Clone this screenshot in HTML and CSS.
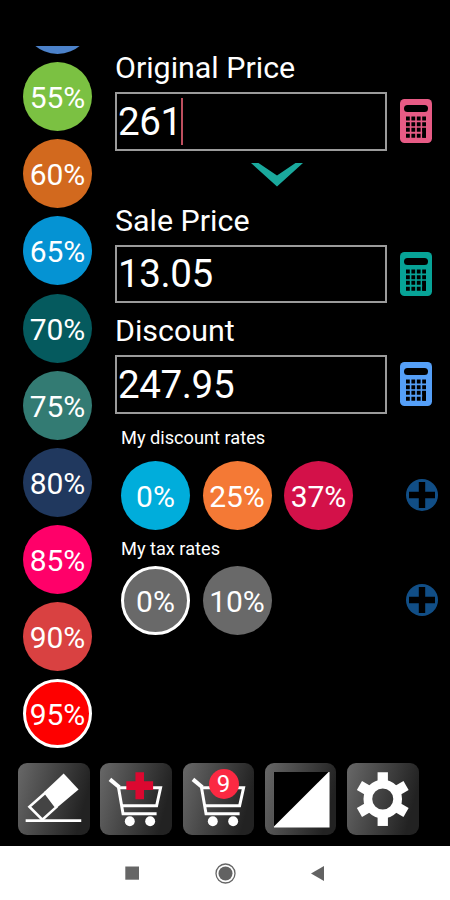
FILE: index.html
```
<!DOCTYPE html>
<html lang="en">
<head>
<meta charset="utf-8">
<title>Discount calculator</title>
<link rel="stylesheet" href="styles.css">
</head>
<body>
<svg class="defs" width="0" height="0">
  <defs>
    <symbol id="calc" viewBox="0 0 32 44">
      <rect width="32" height="44" rx="4.5" fill="currentColor"/>
      <rect x="4" y="6" width="24" height="7" rx="3.5" fill="#000"/>
      <g stroke="#000" stroke-width="4" stroke-dasharray="3.800 1.600">
        <path d="M6 19.500H26.200M6 25.200H26.200M6 30.800H26.200M6 36.700H26.200"/>
      </g>
      <path d="M22.200 29h3.800v9.700h-3.800z" fill="#000"/>
    </symbol>
    <symbol id="plus" viewBox="0 0 32 32">
      <circle cx="16" cy="16" r="16" fill="#114e86"/>
      <path d="M12.800 3h6.400v9.800H29v6.400h-9.800V29h-6.400v-9.800H3v-6.400h9.800z" fill="#000"/>
    </symbol>
    <symbol id="cart" viewBox="0 0 72 72">
      <path d="M18.500 25H61L57 43H22M18.500 24l4.700 27H57" fill="none" stroke="#fff" stroke-width="3"/>
      <path d="M10 16.500l9.500 8" stroke="#fff" stroke-width="4"/>
      <circle cx="30" cy="58.700" r="5" fill="#fff"/>
      <circle cx="50.500" cy="58.700" r="5" fill="#fff"/>
    </symbol>
  </defs>
</svg>
<main class="app">
  <aside class="rates">
    <div class="rate blue"></div>
    <div class="rate green">55%</div>
    <div class="rate orange">60%</div>
    <div class="rate azure">65%</div>
    <div class="rate deep">70%</div>
    <div class="rate sage">75%</div>
    <div class="rate navy">80%</div>
    <div class="rate pink">85%</div>
    <div class="rate coral">90%</div>
    <div class="rate red selected">95%</div>
  </aside>
  <section class="form">
    <label class="title">Original Price</label>
    <div class="row">
      <div class="field"><span>261</span><i class="caret"></i></div>
      <svg class="calc rose"><use href="#calc"/></svg>
    </div>
    <div class="arrow"><svg width="52" height="24" viewBox="0 0 52 24"><path d="M0 0h7.500L26 12.500 44.500 0H52L26 23.500z" fill="#1aa99d"/></svg></div>
    <label class="title">Sale Price</label>
    <div class="row">
      <div class="field"><span>13.05</span></div>
      <svg class="calc teal"><use href="#calc"/></svg>
    </div>
    <label class="title discount">Discount</label>
    <div class="row">
      <div class="field"><span>247.95</span></div>
      <svg class="calc sky"><use href="#calc"/></svg>
    </div>
    <h2 class="small">My discount rates</h2>
    <div class="chips">
      <div class="rate cyan">0%</div>
      <div class="rate amber">25%</div>
      <div class="rate crimson">37%</div>
      <svg class="plus"><use href="#plus"/></svg>
    </div>
    <h2 class="small tax">My tax rates</h2>
    <div class="chips">
      <div class="rate gray selected">0%</div>
      <div class="rate gray">10%</div>
      <svg class="plus"><use href="#plus"/></svg>
    </div>
  </section>
</main>
<nav class="tools">
  <div class="tool"><svg viewBox="0 0 72 72"><path d="M46 10.500L61 26.700 38.500 45.500 26 29.500z" fill="#fff"/><path d="M27.500 30L11.500 44 24.500 57 38.500 44.500z" fill="#444" stroke="#fff" stroke-width="2.600"/><path d="M7.700 58h56" stroke="#fff" stroke-width="2.600"/></svg></div>
  <div class="tool"><svg viewBox="0 0 72 72"><use href="#cart"/><path d="M35.700 9.300h8.600v9h9.200v9h-9.200v9.200h-8.600v-9.200h-9.200v-9h9.200z" fill="#dc0830"/></svg></div>
  <div class="tool"><svg viewBox="0 0 72 72"><use href="#cart"/></svg><span class="badge">9</span></div>
  <div class="tool"><svg viewBox="0 0 72 72"><path d="M9 9h56v56H9z" fill="#fff"/><path d="M9 9h55L9 64z" fill="#000"/></svg></div>
  <div class="tool"><svg viewBox="0 0 72 72">
    <g fill="#fff"><path id="tooth" d="M30.800 9.200h10.400v13h-10.400z"/><use href="#tooth" transform="rotate(60 36 36.300)"/><use href="#tooth" transform="rotate(120 36 36.300)"/><use href="#tooth" transform="rotate(180 36 36.300)"/><use href="#tooth" transform="rotate(240 36 36.300)"/><use href="#tooth" transform="rotate(300 36 36.300)"/></g>
    <circle cx="36" cy="36.300" r="15" fill="none" stroke="#fff" stroke-width="8.800"/></svg></div>
</nav>
<footer class="system">
  <svg viewBox="0 0 450 54"><path d="M125.300 20.500h13.700v13.200h-13.700z" fill="#666"/><circle cx="225.500" cy="27.500" r="9.500" fill="none" stroke="#666" stroke-width="1.300"/><circle cx="225.500" cy="27.500" r="7" fill="#626262"/><path d="M324 20v15l-13-7.500z" fill="#626262"/></svg>
</footer>
</body>
</html>
```
FILE: styles.css
```
* { box-sizing: border-box; }
body {
  margin: 0;
  width: 450px;
  height: 900px;
  overflow: hidden;
  background: #000;
  color: #fff;
  font-family: Roboto, sans-serif;
  display: flex;
  flex-direction: column;
}
svg { display: block; }
.defs { position: absolute; }
.app { height: 763px; padding: 46px 0 0 23px; display: flex; flex: none; }
.rates { width: 92px; height: 710px; overflow: hidden; display: flex; flex-direction: column; justify-content: flex-end; gap: 8.1px; padding-bottom: 8px; }
.rate {
  flex: none;
  width: 69px;
  height: 69px;
  border-radius: 50%;
  display: flex;
  align-items: center;
  justify-content: center;
  font-size: 30px;
  line-height: 1;
  padding-top: 3px;
}
.selected { border: 3px solid #fff; }
.blue { background: #4c82ca; }
.green { background: #7bc142; }
.orange { background: #d2691e; }
.azure { background: #0593d3; }
.deep { background: #055a5e; }
.sage { background: #337b73; }
.navy { background: #20385e; }
.pink { background: #ff0069; }
.coral { background: #d94141; }
.red { background: #fe0000; }
.cyan { background: #00addb; }
.amber { background: #f47935; }
.crimson { background: #d31149; }
.gray { background: #696969; }
.form { width: 335px; }
.title { display: block; height: 46px; padding-top: 4px; font-size: 30.4px; line-height: 36px; }
.title.discount { height: 52px; padding-top: 10px; }
.row { display: flex; align-items: center; gap: 13px; height: 58.500px; }
.field { width: 272px; height: 58.500px; border: 2px solid #9b9b9b; display: flex; align-items: center; padding: 0 1px; font-size: 38.6px; letter-spacing: -0.4px; }
.caret { width: 2px; height: 47px; background: #bd4f5e; margin: 0 0 0 -1px; }
.calc { width: 32px; height: 44px; }
.rose { color: #e75b85; }
.teal { color: #07a397; }
.sky { color: #559ff7; }
.arrow { height: 48px; padding: 12px 0 0 136px; }
.small { margin: 0; padding: 12px 0 0 6px; height: 47px; font-size: 18.2px; font-weight: 400; line-height: 24px; }
.small.tax { height: 36px; padding-top: 7px; }
.chips { display: flex; align-items: center; gap: 12.500px; height: 69px; padding-left: 6px; padding-right: 12px; }
.plus { width: 32px; height: 32px; margin-left: auto; }
.tools { display: flex; gap: 10.8px; height: 83px; padding-left: 18px; }
.tool { position: relative; width: 71.500px; height: 72px; border-radius: 9px; background: linear-gradient(105deg, #686868, #222 85%); }
.badge { position: absolute; left: 26px; top: 6px; width: 30px; height: 30px; border-radius: 50%; background: #fb2942; font-size: 24px; line-height: 31px; text-align: center; }
.system { height: 54px; background: #fff; }
```
